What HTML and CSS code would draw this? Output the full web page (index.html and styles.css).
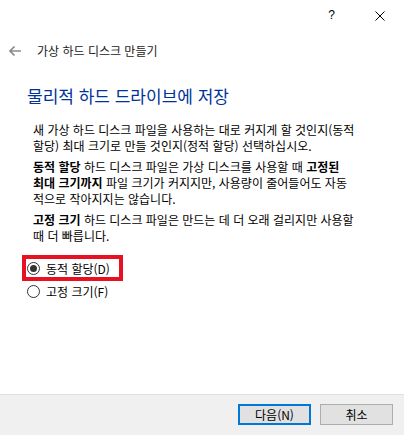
FILE: index.html
```html
<!DOCTYPE html>
<html lang="ko">
<head>
<meta charset="utf-8">
<link rel="stylesheet" href="styles.css">
</head>
<body>
<div class="window">
  <div class="titlebar">
    <span class="help">?</span>
    <svg class="close" width="10" height="10" viewBox="0 0 10 10"><path d="M0.5 0.5 L9.5 9.5 M9.5 0.5 L0.5 9.5" stroke="#000" stroke-width="1" fill="none"/></svg>
  </div>
  <div class="navrow">
    <svg class="back" width="12" height="10" viewBox="0 0 12 10"><path d="M5.5 0.5 L1 5 L5.5 9.5 M1 5 L12 5" stroke="#8a8a8a" stroke-width="1.6" fill="none"/></svg>
    <span class="navtitle">가상 하드 디스크 만들기</span>
  </div>
  <h1 class="heading">물리적 하드 드라이브에 저장</h1>
  <div class="body">
    <p class="para"><span class="line">새 가상 하드 디스크 파일을 사용하는 대로 커지게 할 것인지(동적</span><span class="line">할당) 최대 크기로 만들 것인지(정적 할당) 선택하십시오.</span></p>
    <p class="para"><span class="line"><b>동적 할당</b> 하드 디스크 파일은 가상 디스크를 사용할 때 <b>고정된</b></span><span class="line"><b>최대 크기까지</b> 파일 크기가 커지지만, 사용량이 줄어들어도 자동</span><span class="line">적으로 작아지지는 않습니다.</span></p>
    <p class="para"><span class="line"><b>고정 크기</b> 하드 디스크 파일은 만드는 데 더 오래 걸리지만 사용할</span><span class="line">때 더 빠릅니다.</span></p>
  </div>
  <div class="options">
    <div class="option selected"><span class="radio checked"></span><span class="label">동적 할당(D)</span></div>
    <div class="option"><span class="radio"></span><span class="label">고정 크기(F)</span></div>
  </div>
  <div class="footer">
    <button class="btn primary">다음(N)</button>
    <button class="btn">취소</button>
  </div>
</div>
</body>
</html>
```

FILE: styles.css
```css
html, body {
  margin: 0;
  padding: 0;
  background: #ffffff;
}
.window {
  width: 404px;
  height: 435px;
  display: flex;
  flex-direction: column;
  font-family: "Noto Sans CJK KR", "Liberation Sans", sans-serif;
  font-size: 12px;
  color: #000;
}
.titlebar {
  height: 30px;
  display: flex;
  align-items: center;
  justify-content: flex-end;
  padding-right: 19px;
}
.help {
  font-family: "Liberation Sans", sans-serif;
  font-size: 12px;
  margin-right: 40px;
  margin-top: -1px;
}
.close {
  display: block;
  margin-top: 1px;
}
.navrow {
  height: 14px;
  margin-top: 14px;
  display: flex;
  align-items: center;
  padding-left: 9px;
}
.back {
  display: block;
}
.navtitle {
  margin-left: 16px;
  color: #1a1a1a;
  line-height: 14px;
}
.heading {
  margin: 28px 0 0 27px;
  font-size: 17px;
  font-weight: normal;
  color: #003399;
  line-height: 20px;
}
.body {
  margin-top: 16px;
  padding-left: 33px;
}
.para {
  margin: 0 0 5px 0;
  line-height: 16px;
}
.line {
  display: block;
  white-space: nowrap;
}
.para b {
  font-weight: bold;
}
.options {
  margin-top: 6px;
  padding-left: 22px;
}
.option {
  display: flex;
  align-items: center;
  width: 101px;
  height: 26px;
  box-sizing: border-box;
  padding-left: 5px;
}
.option.selected {
  border: 4px solid #e81123;
  padding-left: 1px;
}
.option + .option {
  margin-top: -3px;
}
.radio {
  width: 13px;
  height: 13px;
  box-sizing: border-box;
  border: 1px solid #333;
  border-radius: 50%;
  background: #fff;
  display: flex;
  align-items: center;
  justify-content: center;
}
.radio.checked::after {
  content: "";
  width: 7px;
  height: 7px;
  border-radius: 50%;
  background: #333;
}
.label {
  margin-left: 6px;
  font-size: 12px;
}
.footer {
  margin-top: auto;
  height: 41px;
  border-top: 1px solid #dfdfdf;
  background: #f0f0f0;
  display: flex;
  align-items: flex-start;
  justify-content: flex-end;
  padding-top: 9px;
  padding-right: 11px;
  box-sizing: border-box;
  gap: 9px;
}
.btn {
  width: 73px;
  height: 21px;
  box-sizing: border-box;
  background: #e1e1e1;
  border: 1px solid #adadad;
  font-family: "Noto Sans CJK KR", "Liberation Sans", sans-serif;
  font-size: 12px;
  padding: 0;
  line-height: 17px;
  color: #000;
}
.btn.primary {
  border: 2px solid #0078d7;
}
```
